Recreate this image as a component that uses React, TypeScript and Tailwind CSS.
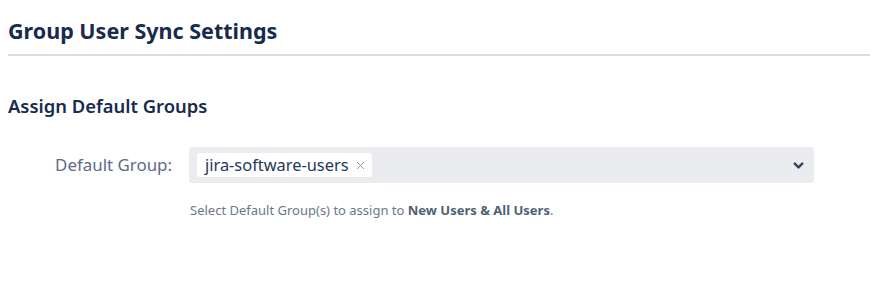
import { ChevronDown, X } from "lucide-react";

export default function App() {
  return (
    <div
      className="w-[870px] h-[292px] bg-white pl-2 text-[#172b4d]"
      style={{ fontFamily: '"Noto Sans", "Open Sans", sans-serif' }}
    >
      {/* Page header */}
      <div className="pt-[17px] pb-[10px] border-b-2 border-[#dcdde0]">
        <h1 className="text-[21.5px] leading-[27px] font-bold text-[#172b4d]">
          Group User Sync Settings
        </h1>
      </div>

      {/* Section */}
      <h2 className="mt-[38px] text-[18.4px] leading-[24px] font-semibold text-[#172b4d]">
        Assign Default Groups
      </h2>

      <div className="mt-[29px] flex items-start">
        <label className="w-[164px] shrink-0 text-right text-[16.9px] leading-[36px] text-[#5e6c84]">
          Default Group:
        </label>
        <div className="ml-[17px] w-[625px]">
          <div className="h-[36px] rounded-[3px] bg-[#ebecf0] flex items-center pl-2 pr-[8px]">
            <span className="flex items-center h-[24px] rounded-[3px] bg-white pl-2 pr-[5px] gap-[5px] text-[16.4px] text-[#253858]">
              jira-software-users
              <X size={13} strokeWidth={1.75} className="text-[#8993a4]" />
            </span>
            <ChevronDown
              size={15}
              strokeWidth={4}
              className="ml-auto text-[#344563]"
            />
          </div>
          <p className="mt-[19px] pl-px text-[13px] leading-[16px] text-[#6b778c]">
            Select Default Group(s) to assign to{" "}
            <span className="font-bold text-[#505f79]">New Users &amp; All Users</span>.
          </p>
        </div>
      </div>
    </div>
  );
}
